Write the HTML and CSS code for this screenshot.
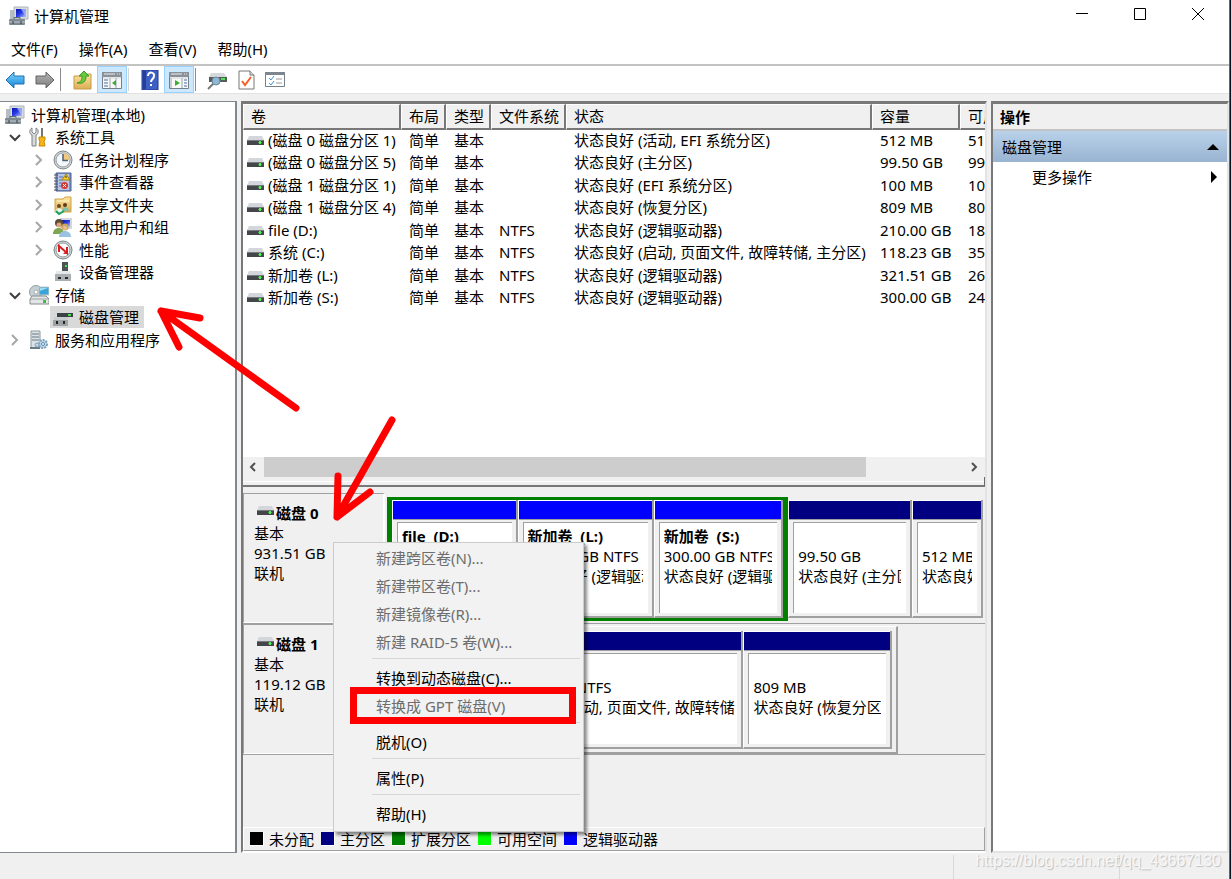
FILE: index.html
```html
<!DOCTYPE html>
<html lang="zh-CN">
<head>
<meta charset="utf-8">
<title>计算机管理</title>
<link rel="stylesheet" href="styles.css">
</head>
<body>
<svg class="sprite" aria-hidden="true">
  <defs>
    <linearGradient id="blueArrow" x1="0" y1="0" x2="0" y2="1"><stop offset="0" stop-color="#7fd4fb"/><stop offset="1" stop-color="#0f86d8"/></linearGradient>
    <linearGradient id="greyArrow" x1="0" y1="0" x2="0" y2="1"><stop offset="0" stop-color="#b4b4b4"/><stop offset="1" stop-color="#7c7c7c"/></linearGradient>
    <linearGradient id="folderFill" x1="0" y1="0" x2="0" y2="1"><stop offset="0" stop-color="#fbe4a0"/><stop offset="1" stop-color="#dcae55"/></linearGradient>
    <linearGradient id="screenFill" x1="0" y1="0" x2="1" y2="1"><stop offset="0" stop-color="#0a12b0"/><stop offset=".5" stop-color="#2a3ce6"/><stop offset="1" stop-color="#b9c8ff"/></linearGradient>
  </defs>
  <symbol id="drive" viewBox="0 0 17 9"><path d="M2 0h13l2 4H0z" fill="#d3d6da"/><rect y="4" width="17" height="5" fill="#44464a"/><rect y="4" width="17" height="1" fill="#777a7e"/><rect x="11" y="6" width="4" height="1" fill="#3fae46"/><rect x="12" y="5" width="2" height="3" fill="#4cf052"/></symbol>
  <symbol id="computer" viewBox="0 0 20 20"><rect x="1" y="4" width="5" height="12" fill="#b4bcc4"/><path d="M5 1h14v12H5z" fill="#d8dcdc" stroke="#aeb4b8"/><path d="M7 3h10v8H7z" fill="url(#screenFill)"/><path d="M12 3h5v8z" fill="#a9b9ff" opacity=".8"/><path d="M10 13h4v3h-4z" fill="#999"/><path d="M5 13v-1.500h6V13" fill="none" stroke="#596870"/><rect x="0" y="13" width="16" height="6" rx="1" fill="#7c8991"/><path d="M0 16h16" stroke="#c3cbd0"/><path d="M4 15v3M12 15v3" stroke="#333e45"/></symbol>
  <symbol id="tools" viewBox="0 0 20 20"><path d="M3 1v4l2 2 2-2V1c3 1 3 6 0 7v11H3V8C0 7 0 2 3 1z" fill="#d7d9da" stroke="#7d8386"/><path d="M12 1h2v9h-2z" fill="#777"/><path d="M10 10h6v3l-1 1 1 5h-6l1-5-1-1z" fill="#f6b61a" stroke="#c98b05"/></symbol>
  <symbol id="clock" viewBox="0 0 20 20"><circle cx="10" cy="10" r="9" fill="#d2d6d8" stroke="#7e868a"/><circle cx="10" cy="10" r="7" fill="#f4f7fb" stroke="#929a9f"/><path d="M10 10V3a7 7 0 0 1 7 7z" fill="#f0ca82"/><path d="M10 4v6.500h5" fill="none" stroke="#4c6073" stroke-width="1.500"/></symbol>
  <symbol id="eventlog" viewBox="0 0 20 20"><path d="M3 1h15v18H3z" fill="#7e95c8" stroke="#4b5f91"/><path d="M5 2h11v16H5z" fill="#b8c7e6"/><path d="M1 3h4M1 6h4M1 9h4M1 12h4M1 15h4M1 18h4" stroke="#4e5663"/><path d="M6 5h4M6 8h3M6 11h3M6 14h3" stroke="#566da5"/><path d="M13 2l4 6H9z" fill="#f5d428" stroke="#a57f08"/><path d="M13 4v2" stroke="#333"/><circle cx="11.500" cy="13.500" r="3.500" fill="#d63a35"/><path d="M10 12l3 3M13 12l-3 3" stroke="#fff"/></symbol>
  <symbol id="sharefolder" viewBox="0 0 20 20"><path d="M2 4h8l2-2h6v15H2z" fill="url(#folderFill)" stroke="#d0a345"/><path d="M4 6h12" stroke="#fff4c8"/><circle cx="6" cy="11" r="2" fill="#6b4a26"/><circle cx="12" cy="10" r="2" fill="#5e3b1c"/><path d="M2 17c1-5 7-5 8 0z" fill="#e8f4ef"/><path d="M9 16c0-5 7-5 7 0z" fill="#7fc2ae"/><path d="M3 16l3 3 5-3" fill="none" stroke="#1da25c" stroke-width="2"/></symbol>
  <symbol id="users" viewBox="0 0 20 20"><path d="M7 1h12v11H7z" fill="#d2d7de"/><path d="M9 3h8v7H9z" fill="url(#screenFill)"/><circle cx="6" cy="6" r="4" fill="#5d4b35"/><circle cx="6" cy="8" r="2.500" fill="#dda57a"/><path d="M0 17c0-8 11-8 11 0z" fill="#7fa650"/><circle cx="12" cy="10" r="3.500" fill="#cba65c"/><circle cx="12" cy="11" r="2" fill="#e9bd94"/><path d="M6 20c0-8 12-8 12 0z" fill="#9cc0e0"/></symbol>
  <symbol id="perf" viewBox="0 0 20 20"><circle cx="10" cy="10" r="9" fill="#d5d9da" stroke="#7b8486"/><circle cx="10" cy="10" r="7" fill="#fff" stroke="#8d9698"/><path d="M6 12V6l8 7V7" fill="none" stroke="#d62023" stroke-width="2"/><path d="M10 14h5v-5z" fill="#d62023"/></symbol>
  <symbol id="device" viewBox="0 0 20 20"><path d="M9 0h6v11H9z" fill="#4d5355"/><path d="M12 3h2v2h-2z" fill="#46e34c"/><path d="M3 9h14l1 10H2z" fill="#e5e7e8"/><path d="M2 12h16v7H2z" fill="#aaafb2"/><path d="M5 15h3v2H5zM12 15h3v2h-3z" fill="#25292b"/></symbol>
  <symbol id="storage" viewBox="0 0 20 20"><circle cx="7" cy="7" r="6.500" fill="#c5d0d3" stroke="#8e9c9e"/><circle cx="7" cy="7" r="2" fill="#fff" stroke="#a4b1b3"/><path d="M10 2h10v8H10z" fill="#3ba3d5" stroke="#c3c9cb"/><path d="M11 3h8l-8 3z" fill="#98dbf4"/><path d="M3 11h14l3 3v5H1v-5z" fill="#e3e6e7" stroke="#858b8d"/><path d="M1 14h18" stroke="#9ba1a3"/><path d="M14 15h3v3h-3z" fill="#3fbf3c"/></symbol>
  <symbol id="diskmgmt" viewBox="0 0 20 20"><path d="M6 3h12l2 3H4z" fill="#d6d9dc"/><path d="M4 6h16v4H4z" fill="#3b4144"/><path d="M15 7h3v2h-3z" fill="#54d854"/><path d="M1 10h14v9H1z" fill="#c9cdcf"/><path d="M0 13h15v6H0z" fill="#9ea3a6"/><path d="M3 14h2v3H3zM10 14h2v3h-2z" fill="#222"/></symbol>
  <symbol id="services" viewBox="0 0 20 20"><path d="M2 1h9v17H2z" fill="#dbe2e6" stroke="#8b989e"/><path d="M3 4h7M3 7h7M3 10h7" stroke="#687a83"/><path d="M1 18h10" stroke="#687a83" stroke-width="2"/><circle cx="14" cy="14" r="4" fill="#c0d8ea" stroke="#7ca1bd" stroke-width="2" stroke-dasharray="2 1"/><circle cx="14" cy="14" r="1.500" fill="#fff" stroke="#5b86a7"/><circle cx="8" cy="15" r="2" fill="#c0d8ea" stroke="#7ca1bd"/></symbol>
  <symbol id="chev-right" viewBox="0 0 12 12"><path d="M3 1l5 5-5 5" fill="none" stroke="#a6a6a6" stroke-width="2"/></symbol>
  <symbol id="chev-down" viewBox="0 0 12 12"><path d="M1 4l5 5 5-5" fill="none" stroke="#404040" stroke-width="2"/></symbol>
  <symbol id="panel" viewBox="0 0 20 20"><path d="M.5 2.500h19v16H.5z" fill="#f8f8f8" stroke="#777f88"/><path d="M0 2h20v5H0z" fill="#8a9199"/><path d="M2 4h11M15 4h1M17 4h1" stroke="#eceff2"/><path d="M1 8h18" stroke="#d4d7da"/></symbol>
</svg>

<div class="window">
  <header class="titlebar">
    <svg class="icon"><use href="#computer"/></svg>
    <h1 class="window-title">计算机管理</h1>
    <div class="window-buttons">
      <button aria-label="最小化"><svg class="glyph" viewBox="0 0 12 12"><path d="M0 5.500h12" stroke="#000"/></svg></button>
      <button aria-label="最大化"><svg class="glyph" viewBox="0 0 12 12"><path d="M.5.500h11v11H.5z" fill="none" stroke="#000"/></svg></button>
      <button aria-label="关闭"><svg class="glyph" viewBox="0 0 12 12"><path d="M0 0l12 12M12 0L0 12" stroke="#000"/></svg></button>
    </div>
  </header>
  <nav class="menubar">
    <button>文件(F)</button><button>操作(A)</button><button>查看(V)</button><button>帮助(H)</button>
  </nav>
  <div class="toolbar">
    <button class="tool" aria-label="后退"><svg class="icon" viewBox="0 0 20 20"><path d="M1 10l8-8v4h10v8H9v4z" fill="url(#blueArrow)" stroke="#246fae"/></svg></button>
    <button class="tool" aria-label="前进"><svg class="icon" viewBox="0 0 20 20"><path d="M19 10l-8-8v4H1v8h10v4z" fill="url(#greyArrow)" stroke="#636363"/></svg></button>
    <span class="divider"></span>
    <button class="tool gap-before" aria-label="上一级"><svg class="icon" viewBox="0 0 20 20"><path d="M1 6h8l2-2h7v15H1z" fill="url(#folderFill)" stroke="#c69a46"/><path d="M4 13c4-1 5-3 5-7H6l5-5 5 5h-3c0 6-3 8-9 7z" fill="#67c93b" stroke="#3b992a"/></svg></button>
    <button class="tool pressed" aria-label="显示控制台树"><svg class="icon" viewBox="0 0 20 20"><use href="#panel"/><path d="M2 10h4M2 13h4M2 16h4" stroke="#456fa5"/><path d="M8 8v10M14 8v10" stroke="#9aa4ae"/><path d="M14 10v6l-4-3z" fill="#3cad2d"/></svg></button>
    <span class="divider faint"></span>
    <button class="tool gap-before-small" aria-label="帮助"><svg class="icon" viewBox="0 0 20 20"><path d="M2 0h16v20H2z" fill="#3e5fc4" stroke="#233b8c"/><path d="M3 1h3v18H3z" fill="#263f98"/><path d="M8 6c0-5 7-4 6 0 0 3-3 3-3 6" fill="none" stroke="#fff" stroke-width="2"/><path d="M10 14h2v2h-2z" fill="#fff"/></svg></button>
    <button class="tool pressed" aria-label="显示操作窗格"><svg class="icon" viewBox="0 0 20 20"><use href="#panel"/><path d="M15 10h3M15 13h3M15 16h3" stroke="#456fa5"/><path d="M13 8v10M2 8v10" stroke="#9aa4ae"/><path d="M6 10v6l5-3z" fill="#3cad2d"/></svg></button>
    <span class="divider"></span>
    <button class="tool gap-before-small" aria-label="重新扫描磁盘"><svg class="icon" viewBox="0 0 20 20"><path d="M4 3h13l3 4H2z" fill="#d6d9dc"/><path d="M2 7h18v5H2z" fill="#565b5e"/><path d="M14 8h4v2h-4z" fill="#4fe34e"/><path d="M7 13l-6 6" stroke="#777" stroke-width="2"/><circle cx="9" cy="11" r="4" fill="#8fb9d3" stroke="#68869b"/></svg></button>
    <button class="tool" aria-label="属性"><svg class="icon" viewBox="0 0 20 20"><path d="M3 1h11l4 4v14H3z" fill="#fff" stroke="#777"/><path d="M14 1v4h4" fill="#ddd" stroke="#777"/><path d="M6 11l3 4 6-8" fill="none" stroke="#f06025" stroke-width="2"/></svg></button>
    <button class="tool" aria-label="设置"><svg class="icon" viewBox="0 0 20 20"><path d="M.5 2.500h19v14H.5z" fill="#fff" stroke="#777f88"/><path d="M0 2h20v3H0z" fill="#7d858e"/><path d="M4 8l2 2 3-4M4 13l2 2 3-4" fill="none" stroke="#3d94df"/><path d="M11 9h6M11 13h6" stroke="#999"/></svg></button>
  </div>

  <main class="workspace">
    <nav class="tree-pane" aria-label="控制台树">
      <ul class="tree">
        <li class="level-root"><svg class="icon"><use href="#computer"/></svg><a href="#">计算机管理(本地)</a></li>
        <li class="level-1"><button aria-label="折叠"><svg class="glyph"><use href="#chev-down"/></svg></button><svg class="icon"><use href="#tools"/></svg><a href="#">系统工具</a></li>
        <li class="level-2"><button aria-label="展开"><svg class="glyph"><use href="#chev-right"/></svg></button><svg class="icon"><use href="#clock"/></svg><a href="#">任务计划程序</a></li>
        <li class="level-2"><button aria-label="展开"><svg class="glyph"><use href="#chev-right"/></svg></button><svg class="icon"><use href="#eventlog"/></svg><a href="#">事件查看器</a></li>
        <li class="level-2"><button aria-label="展开"><svg class="glyph"><use href="#chev-right"/></svg></button><svg class="icon"><use href="#sharefolder"/></svg><a href="#">共享文件夹</a></li>
        <li class="level-2"><button aria-label="展开"><svg class="glyph"><use href="#chev-right"/></svg></button><svg class="icon"><use href="#users"/></svg><a href="#">本地用户和组</a></li>
        <li class="level-2"><button aria-label="展开"><svg class="glyph"><use href="#chev-right"/></svg></button><svg class="icon"><use href="#perf"/></svg><a href="#">性能</a></li>
        <li class="level-leaf"><span class="entry"><svg class="icon"><use href="#device"/></svg><a href="#">设备管理器</a></span></li>
        <li class="level-1"><button aria-label="折叠"><svg class="glyph"><use href="#chev-down"/></svg></button><svg class="icon"><use href="#storage"/></svg><a href="#">存储</a></li>
        <li class="level-leaf"><span class="entry selected"><svg class="icon"><use href="#diskmgmt"/></svg><a href="#">磁盘管理</a></span></li>
        <li class="level-1"><button aria-label="展开"><svg class="glyph"><use href="#chev-right"/></svg></button><svg class="icon"><use href="#services"/></svg><a href="#">服务和应用程序</a></li>
      </ul>
    </nav>

    <section class="disk-pane">
      <div class="volume-list">
        <table class="volumes">
          <colgroup><col class="c-name"><col class="c-short"><col class="c-short"><col class="c-fs"><col class="c-status"><col class="c-size"><col class="c-free"></colgroup>
          <thead><tr><th>卷</th><th>布局</th><th>类型</th><th>文件系统</th><th>状态</th><th>容量</th><th>可用</th></tr></thead>
          <tbody>
            <tr><td><svg class="drive"><use href="#drive"/></svg>(磁盘 0 磁盘分区 1)</td><td>简单</td><td>基本</td><td></td><td>状态良好 (活动, EFI 系统分区)</td><td>512 MB</td><td>51</td></tr>
            <tr><td><svg class="drive"><use href="#drive"/></svg>(磁盘 0 磁盘分区 5)</td><td>简单</td><td>基本</td><td></td><td>状态良好 (主分区)</td><td>99.50 GB</td><td>99</td></tr>
            <tr><td><svg class="drive"><use href="#drive"/></svg>(磁盘 1 磁盘分区 1)</td><td>简单</td><td>基本</td><td></td><td>状态良好 (EFI 系统分区)</td><td>100 MB</td><td>10</td></tr>
            <tr><td><svg class="drive"><use href="#drive"/></svg>(磁盘 1 磁盘分区 4)</td><td>简单</td><td>基本</td><td></td><td>状态良好 (恢复分区)</td><td>809 MB</td><td>80</td></tr>
            <tr><td><svg class="drive"><use href="#drive"/></svg>file (D:)</td><td>简单</td><td>基本</td><td>NTFS</td><td>状态良好 (逻辑驱动器)</td><td>210.00 GB</td><td>18</td></tr>
            <tr><td><svg class="drive"><use href="#drive"/></svg>系统 (C:)</td><td>简单</td><td>基本</td><td>NTFS</td><td>状态良好 (启动, 页面文件, 故障转储, 主分区)</td><td>118.23 GB</td><td>35</td></tr>
            <tr><td><svg class="drive"><use href="#drive"/></svg>新加卷 (L:)</td><td>简单</td><td>基本</td><td>NTFS</td><td>状态良好 (逻辑驱动器)</td><td>321.51 GB</td><td>26</td></tr>
            <tr><td><svg class="drive"><use href="#drive"/></svg>新加卷 (S:)</td><td>简单</td><td>基本</td><td>NTFS</td><td>状态良好 (逻辑驱动器)</td><td>300.00 GB</td><td>24</td></tr>
          </tbody>
        </table>
      </div>
      <div class="scrollbar">
        <button aria-label="向左滚动"><svg viewBox="0 0 20 20"><path d="M12 6l-4 4 4 4" fill="none" stroke="#505050" stroke-width="2"/></svg></button>
        <div class="track"><div class="thumb"></div></div>
        <button aria-label="向右滚动"><svg viewBox="0 0 20 20"><path d="M8 6l4 4-4 4" fill="none" stroke="#505050" stroke-width="2"/></svg></button>
      </div>
      <div class="splitter"></div>

      <div class="disk-map">
        <article class="disk">
          <div class="disk-label"><h2><svg class="drive"><use href="#drive"/></svg>磁盘 0</h2><p>基本</p><p>931.51 GB</p><p>联机</p></div>
          <div class="partitions">
            <div class="extended">
              <div class="volume logical vol-d"><div class="bar"></div><div class="info"><b>file  (D:)</b></div></div>
              <div class="volume logical vol-l"><div class="bar"></div><div class="info"><b>新加卷  (L:)</b><span>321.51 GB NTFS</span><span>状态良好 (逻辑驱动器)</span></div></div>
              <div class="volume logical vol-s"><div class="bar"></div><div class="info"><b>新加卷  (S:)</b><span>300.00 GB NTFS</span><span>状态良好 (逻辑驱动器)</span></div></div>
            </div>
            <div class="volume vol-primary"><div class="bar"></div><div class="info"><b></b><span>99.50 GB</span><span>状态良好 (主分区)</span></div></div>
            <div class="volume vol-efi"><div class="bar"></div><div class="info"><b></b><span>512 MB</span><span>状态良好</span></div></div>
          </div>
        </article>
        <article class="disk">
          <div class="disk-label"><h2><svg class="drive"><use href="#drive"/></svg>磁盘 1</h2><p>基本</p><p>119.12 GB</p><p>联机</p></div>
          <div class="partitions framed">
            <div class="volume vol-boot"><div class="bar"></div><div class="info"></div></div>
            <div class="volume vol-c"><div class="bar"></div><div class="info"><b></b><span>118.23 GB NTFS</span><span>状态良好 (启动, 页面文件, 故障转储, 主分区)</span></div></div>
            <div class="volume vol-recovery"><div class="bar"></div><div class="info"><b></b><span>809 MB</span><span>状态良好 (恢复分区</span></div></div>
          </div>
        </article>
      </div>
      <ul class="legend">
        <li><i class="sw-none"></i>未分配</li><li><i class="sw-primary"></i>主分区</li><li><i class="sw-extended"></i>扩展分区</li><li><i class="sw-free"></i>可用空间</li><li><i class="sw-logical"></i>逻辑驱动器</li>
      </ul>
    </section>

    <aside class="actions-pane">
      <h2 class="actions-title">操作</h2>
      <button class="actions-group">磁盘管理<svg class="glyph" viewBox="0 0 12 12"><path d="M0 9l6-6 6 6z"/></svg></button>
      <button class="actions-item">更多操作<svg class="glyph" viewBox="0 0 12 12"><path d="M4 0l6 6-6 6z"/></svg></button>
    </aside>
  </main>

  <footer class="statusbar">
    <span class="status-main"></span><span class="status-cell"></span><span class="status-cell last"></span>
    <span class="watermark">https://blog.csdn.net/qq_43667130</span>
  </footer>

  <div class="context-menu" role="menu">
    <button role="menuitem" disabled>新建跨区卷(N)...</button>
    <button role="menuitem" disabled>新建带区卷(T)...</button>
    <button role="menuitem" disabled>新建镜像卷(R)...</button>
    <button role="menuitem" disabled>新建 RAID-5 卷(W)...</button>
    <hr>
    <button role="menuitem">转换到动态磁盘(C)...</button>
    <button role="menuitem" disabled>转换成 GPT 磁盘(V)</button>
    <hr>
    <button role="menuitem">脱机(O)</button>
    <hr>
    <button role="menuitem">属性(P)</button>
    <hr>
    <button role="menuitem">帮助(H)</button>
  </div>

  <svg class="annotations" viewBox="0 0 600 740" aria-hidden="true">
    <g fill="none" stroke="#f00" stroke-width="7" stroke-linecap="round" stroke-linejoin="round">
      <path d="M296 408L161 311M200 318l-39-7 18 36"/>
      <path d="M392 420l-55 97M338 476l-1 41 33-25"/>
      <path d="M353.500 690.500h219v30h-219z" stroke-linejoin="miter"/>
    </g>
  </svg>
</div>
</body>
</html>
```

FILE: styles.css
```css
* { box-sizing: border-box; }

body {
  margin: 0;
  background: #0a1420;
  color: #000;
  font: 15px/20px "Noto Sans", "Noto Sans CJK SC", sans-serif;
}

h1, h2, p, ul { margin: 0; padding: 0; font-size: 15px; font-weight: 400; }
ul { list-style: none; }
button { margin: 0; padding: 0; border: 0; background: none; color: inherit; font: inherit; text-align: left; }
a { color: inherit; text-decoration: none; }
svg { display: block; flex: none; }

.sprite { position: absolute; width: 0; height: 0; }
.icon { width: 20px; height: 20px; }
.glyph { width: 12px; height: 12px; }
.drive { width: 17px; height: 9px; }

.window {
  position: relative;
  display: flex;
  flex-direction: column;
  min-height: 100vh;
  margin-right: 1px;
  border-right: 1px solid #2474b8;
  background: #f0f0f0;
}

/* Title, menu and tool bars */
.titlebar { display: flex; align-items: center; height: 33px; padding: 0 2px 2px 9px; gap: 5px; background: #fff; }
.window-buttons { display: flex; align-self: stretch; margin-left: auto; }
.window-buttons button { display: flex; align-items: center; justify-content: center; width: 58px; padding-bottom: 3px; }
.menubar { display: flex; align-items: center; gap: 21px; height: 31px; padding-left: 11px; background: #fff; }
.toolbar { display: flex; align-items: stretch; height: 29px; border-top: 2px solid #c3c3c3; background: #fff; }
.tool { display: flex; align-items: center; justify-content: center; width: 29px; }
.tool:first-child { width: 30px; }
.tool.pressed { width: 30px; border: 1px solid #99d1ff; background: #cce8ff; }
.divider { width: 1px; margin: 2px 1px; background: #8c8c8c; }
.divider.faint { background: #d5d5d5; }
.gap-before { margin-left: 6px; }
.gap-before-small { margin-left: 5px; }

/* Three panes */
.workspace {
  flex: 1;
  display: grid;
  grid-template-columns: 237px minmax(0, 1fr) 238px;
  gap: 4px;
  padding-top: 7px;
  border-top: 1px solid #e3e3e3;
}
.tree-pane { padding-top: 1px; border: 1px solid #828790; border-left: 0; border-right-width: 2px; background: #fff; }
.tree li { display: flex; align-items: center; height: 22px; }
.tree li:nth-child(odd) { height: 23px; }
.level-root { padding-left: 5px; gap: 6px; }
.level-1 { padding-left: 9px; gap: 6px; }
.level-2 { padding-left: 33px; gap: 6px; }
.tree .glyph { margin-right: 2px; }
.level-leaf { padding-left: 50px; }
.entry { display: flex; align-items: center; gap: 6px; height: 22px; padding: 0 5px 0 3px; }
.selected { background: #d9d9d9; }

.disk-pane {
  display: flex;
  flex-direction: column;
  min-width: 0;
  border: 2px solid #e3e3e3;
  border-top: 3px solid #787878;
  border-left-color: #787878;
  border-bottom-color: #fff;
}
.volume-list { flex: 1; overflow: hidden; background: #fff; }
.volumes { width: 840px; border-collapse: separate; border-spacing: 0; table-layout: fixed; }
.c-name { width: 158px; }
.c-short { width: 45px; }
.c-fs { width: 75px; }
.c-status { width: 306px; }
.c-size { width: 88px; }
.volumes th {
  height: 26px;
  padding: 0 0 1px 7px;
  border: 1px solid #fff;
  border-right: 2px solid #787878;
  border-bottom: 2px solid #787878;
  background: #f0f0f0;
  font-weight: 400;
  text-align: left;
  white-space: nowrap;
}
.volumes td { height: 22px; padding: 0 0 4px 8px; line-height: 18px; white-space: nowrap; }
.volumes tbody tr:nth-child(odd) td { height: 23px; }
.volumes td:first-child { padding-left: 4px; }
.volumes .drive { display: inline-block; margin-right: 4px; vertical-align: 1px; }

.scrollbar { display: flex; height: 20px; background: #f0f0f0; }
.scrollbar button { width: 21px; }
.scrollbar svg { width: 20px; height: 20px; }
.track { flex: 1; }
.thumb { width: 86%; height: 20px; background: #cdcdcd; }
.splitter { height: 10px; margin-bottom: 6px; border-right: 1px solid #696969; border-bottom: 2px solid #787878; box-shadow: inset 0 4px #f0f0f0, inset 0 5px #fff; }

/* Graphical disk view */
.disk-map { min-height: 334px; }
.disk { display: flex; height: 131px; border-bottom: 1px solid #a0a0a0; }
.disk-label { width: 142px; padding: 9px 0 0 10px; border: 1px solid #a0a0a0; border-right: 2px solid #fff; border-bottom: 1px solid #fff; }
.disk-label h2 { display: flex; gap: 2px; padding-left: 3px; font-weight: 700; }
.disk-label .drive { margin-top: 3px; }
.partitions { flex: 1; display: flex; min-width: 0; margin: 4px 2px 2px; }
.framed { flex: none; width: 512px; margin: 2px 0 0 1px; padding: 4px 4px 3px; border: 1px solid #fff; border-right: 2px solid #a0a0a0; border-bottom: 2px solid #a0a0a0; }
.extended { flex: 402 1 0; display: flex; min-width: 0; border: 3px solid #008000; border-width: 3px 5px; }
.volume { display: flex; flex-direction: column; min-width: 0; border-left: 1px solid #fff; border-right: 2px solid #a0a0a0; border-bottom: 2px solid #a0a0a0; }
.partitions > .volume { margin: 3px 0; }
.framed > .volume { margin: 0; }
.bar { height: 20px; border-top: 1px solid #fff; border-bottom: 1px solid #a0a0a0; background: #000080; }
.logical .bar { background: #0000ff; }
.info {
  flex: 1;
  display: flex;
  flex-direction: column;
  margin: 2px 4px 3px;
  padding: 3px 5px 0 4px;
  border-top: 1px solid #a0a0a0;
  border-left: 1px solid #a0a0a0;
  background: #fff;
}
.info b, .info span { height: 20px; overflow: hidden; white-space: pre; }
.vol-d { flex: 126 1 0; }
.vol-l { flex: 137 1 0; }
.vol-s { flex: 130 1 0; }
.vol-primary { flex: 124 1 0; }
.vol-efi { flex: 70 1 0; }
.vol-boot { flex: 98 1 0; }
.vol-c { flex: 254 1 0; }
.vol-c .info { padding-right: 2px; }
.vol-recovery { flex: 148 1 0; }

.legend { display: flex; align-items: center; gap: 7px; height: 24px; padding-left: 6px; border: 1px solid #fff; border-right: 1px solid #a0a0a0; border-bottom: 1px solid #a0a0a0; }
.legend li { display: flex; align-items: center; gap: 5px; }
.legend i { width: 14px; height: 14px; border: 1px solid #fff; border-width: 0 1px 1px 0; }
.sw-none { background: #000; }
.sw-primary { background: #000080; }
.sw-extended { background: #008000; }
.sw-free { background: #00ff00; }
.sw-logical { background: #0000ff; }

.actions-pane { border: 2px solid #787878; border-top-width: 3px; border-right-color: #e3e3e3; border-bottom-color: #e3e3e3; background: #fff; }
.actions-title { height: 27px; padding: 3px 7px; border-bottom: 2px solid #c3c3c3; background: #f0f0f0; font-weight: 700; }
.actions-group, .actions-item { display: flex; align-items: center; justify-content: space-between; width: 100%; height: 31px; padding: 0 8px 0 9px; }
.actions-group { background: linear-gradient(#b9d1ea, #99b4d1); }
.actions-item { height: 29px; padding: 0 8px 0 39px; }

.statusbar { position: relative; display: flex; height: 26px; padding-top: 2px; }
.status-main { flex: 1; }
.status-cell { width: 166px; border-left: 1px solid #d9d9d9; }
.status-cell.last { width: 110px; }
.watermark { position: absolute; right: 8px; top: -2px; color: #f8f8f8; font: 16px/20px "Liberation Sans", sans-serif; text-shadow: 1px 1px 1px #bdbdbd; }

/* Overlays */
.context-menu {
  position: absolute;
  left: 333px;
  top: 542px;
  width: 251px;
  padding: 1px 3px 3px;
  border: 1px solid #ccc;
  background: #f2f2f2;
  box-shadow: 3px 3px 3px rgba(0, 0, 0, .45);
}
.context-menu button { display: block; width: 100%; height: 28px; padding-left: 39px; }
.context-menu button:disabled { color: #6d6d6d; }
.context-menu hr { height: 1px; margin: 2px 0 5px 35px; border: 0; background: #d7d7d7; }
.annotations { position: absolute; left: 0; top: 0; width: 600px; height: 740px; pointer-events: none; }
```
